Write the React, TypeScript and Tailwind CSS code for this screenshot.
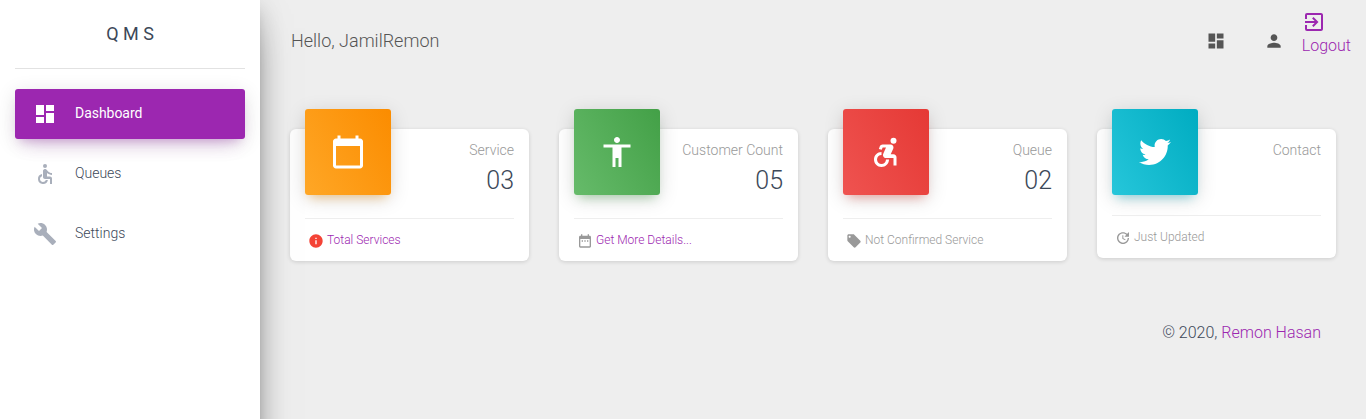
import type { ReactNode } from "react";
import type { IconType } from "react-icons";
import { FaTwitter } from "react-icons/fa";
import {
  MdAccessibility,
  MdAccessible,
  MdAccessibleForward,
  MdBuild,
  MdCalendarToday,
  MdDashboard,
  MdDateRange,
  MdExitToApp,
  MdInfo,
  MdLocalOffer,
  MdPerson,
  MdUpdate,
} from "react-icons/md";

type NavItemProps = { icon: IconType; label: string; active?: boolean };

function NavItem({ icon: Icon, label, active = false }: NavItemProps) {
  return (
    <a
      href="#"
      className={
        active
          ? "flex h-[50px] items-center rounded-[3px] bg-[#9c27b0] text-white shadow-[0_12px_20px_-10px_rgba(156,39,176,0.28),0_4px_20px_0_rgba(0,0,0,0.12),0_7px_8px_-5px_rgba(156,39,176,0.2)]"
          : "flex h-[50px] items-center rounded-[3px] text-[#3c4858]"
      }
    >
      <Icon className={active ? "ml-[18px] size-6" : "ml-[18px] size-6 text-[#a9afbb]"} />
      <span className={active ? "-mt-0.5 ml-[18px] text-sm font-normal leading-[30px] tracking-[-0.04px]" : "-mt-0.5 ml-[18px] text-sm font-light leading-[30px]"}>
        {label}
      </span>
    </a>
  );
}

type StatCardProps = {
  icon: ReactNode;
  tone: string;
  label: string;
  value?: string;
  footer: ReactNode;
};

function StatCard({ icon, tone, label, value, footer }: StatCardProps) {
  return (
    <section className="flex flex-col rounded-md bg-white px-[15px] shadow-[0_1px_4px_0_rgba(0,0,0,0.14)]">
      <div className={value ? "flex h-[89px] justify-between" : "flex h-[86px] justify-between"}>
        <div className={`-mt-5 flex size-[86px] items-center justify-center rounded-[3px] text-white ${tone}`}>
          {icon}
        </div>
        <div className="pt-[11px] text-right">
          <p className="text-sm font-light leading-[21px] text-[#999999]">{label}</p>
          {value && <h3 className="mt-0.5 text-[25px] font-light leading-9 text-[#3c4858]">{value}</h3>}
        </div>
      </div>
      <div className="flex h-[43px] items-center border-t border-[#eeeeee] pl-[3px] text-xs font-light text-[#999999]">
        {footer}
      </div>
    </section>
  );
}

export default function App() {
  return (
    <div className="flex h-[419px] overflow-hidden bg-[#eeeeee] font-['Roboto','Liberation_Sans',sans-serif] text-[#3c4858]">
      <aside className="relative h-[470px] w-[260px] shrink-0 bg-white px-[15px] shadow-[0_16px_38px_-12px_rgba(0,0,0,0.56),0_4px_25px_0_rgba(0,0,0,0.12),0_8px_10px_-5px_rgba(0,0,0,0.2)]">
        <div className="flex h-[69px] items-center justify-center border-b border-[#e2e2e2] text-lg font-normal text-[#3c4858]">
          <span>Q M S</span>
        </div>
        <nav className="mt-5 flex flex-col gap-[10px]">
          <NavItem icon={MdDashboard} label="Dashboard" active />
          <NavItem icon={MdAccessible} label="Queues" />
          <NavItem icon={MdBuild} label="Settings" />
        </nav>
      </aside>

      <div className="flex grow flex-col">
        <header className="flex h-[129px] items-start justify-between pl-[31px]">
          <h1 className="mt-[27px] text-lg font-light leading-[27px] text-[#555555]">Hello, JamilRemon</h1>
          <div className="flex text-[#555555]">
            <MdDashboard className="mt-[31px] size-5" />
            <MdPerson className="ml-[38px] mt-[31px] size-5" />
            <a href="#" className="ml-[18px] mr-[15px] mt-[10px] block text-base font-light leading-6 text-[#9c27b0]">
              <MdExitToApp className="size-6" />
              <span className="block">Logout</span>
            </a>
          </div>
        </header>

        <main className="grid grid-cols-4 items-start gap-[30px] px-[30px]">
          <StatCard
            icon={<MdCalendarToday className="size-9" />}
            tone="bg-[linear-gradient(60deg,#ffa726,#fb8c00)] shadow-[0_4px_20px_0_rgba(0,0,0,0.14),0_7px_10px_-5px_rgba(255,152,0,0.4)]"
            label="Service"
            value="03"
            footer={
              <>
                <MdInfo className="mt-0.5 size-4 text-[#f44336]" />
                <a href="#" className="ml-[3px] text-[#9c27b0]">Total Services</a>
              </>
            }
          />
          <StatCard
            icon={<MdAccessibility className="size-9" />}
            tone="bg-[linear-gradient(60deg,#66bb6a,#43a047)] shadow-[0_4px_20px_0_rgba(0,0,0,0.14),0_7px_10px_-5px_rgba(76,175,80,0.4)]"
            label="Customer Count"
            value="05"
            footer={
              <>
                <MdDateRange className="mt-0.5 size-4" />
                <a href="#" className="ml-[3px] text-[#9c27b0]">Get More Details...</a>
              </>
            }
          />
          <StatCard
            icon={<MdAccessibleForward className="size-9" />}
            tone="bg-[linear-gradient(60deg,#ef5350,#e53935)] shadow-[0_4px_20px_0_rgba(0,0,0,0.14),0_7px_10px_-5px_rgba(244,67,54,0.4)]"
            label="Queue"
            value="02"
            footer={
              <>
                <MdLocalOffer className="mt-0.5 size-4" />
                <span className="ml-[3px]">Not Confirmed Service</span>
              </>
            }
          />
          <StatCard
            icon={<FaTwitter className="size-8" />}
            tone="bg-[linear-gradient(60deg,#26c6da,#00acc1)] shadow-[0_4px_20px_0_rgba(0,0,0,0.14),0_7px_10px_-5px_rgba(0,188,212,0.4)]"
            label="Contact"
            footer={
              <>
                <MdUpdate className="mt-0.5 size-4" />
                <span className="ml-[3px]">Just Updated</span>
              </>
            }
          />
        </main>

        <footer className="mt-[60px] pr-[45px] text-right text-base font-light leading-6">
          © 2020, <a href="#" className="text-[#9c27b0]">Remon Hasan</a>
        </footer>
      </div>
    </div>
  );
}
